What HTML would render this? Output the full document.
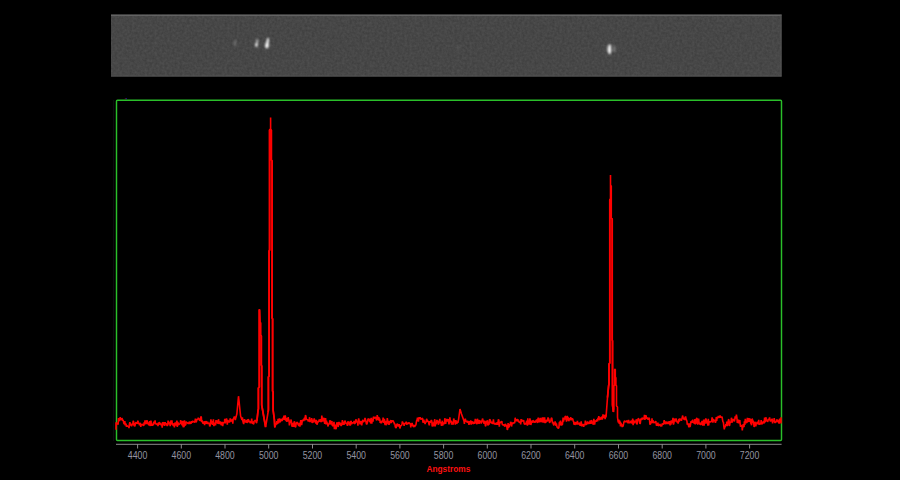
<!DOCTYPE html>
<html><head><meta charset="utf-8"><title>Spectrum</title>
<style>
html,body{margin:0;padding:0;background:#000;}
body{width:900px;height:480px;overflow:hidden;}
svg{display:block;}
text{font-family:"Liberation Sans",sans-serif;}
</style></head><body>
<svg width="900" height="480" viewBox="0 0 900 480">
<defs>
<filter id="grain" x="0" y="0" width="100%" height="100%" color-interpolation-filters="sRGB">
<feTurbulence type="fractalNoise" baseFrequency="0.4" numOctaves="2" seed="3" result="n"/>
<feColorMatrix in="n" type="matrix" values="0.09 0 0 0 0.233  0.09 0 0 0 0.233  0.09 0 0 0 0.233  0 0 0 0 1" result="g"/>
<feComposite in="g" in2="SourceGraphic" operator="in"/>
</filter>
<filter id="b1" x="-100%" y="-100%" width="300%" height="300%"><feGaussianBlur stdDeviation="0.85"/></filter>
<filter id="b2" x="-100%" y="-100%" width="300%" height="300%"><feGaussianBlur stdDeviation="1"/></filter>
<linearGradient id="sg" x1="0" x2="1" y1="0" y2="0">
<stop offset="0" stop-color="#444"/><stop offset="0.5" stop-color="#494949"/><stop offset="1" stop-color="#464646"/>
</linearGradient>
</defs>
<rect width="900" height="480" fill="#000"/>
<!-- spectrum image strip -->
<g>
<rect x="111" y="14.5" width="670.5" height="62" fill="url(#sg)" filter="url(#grain)"/>
<rect x="111" y="14.7" width="670.5" height="1" fill="#707070"/><rect x="111" y="75.6" width="670.5" height="0.9" fill="#555"/><rect x="780.6" y="14.5" width="0.9" height="62" fill="#555"/>
<g filter="url(#b1)">
<ellipse cx="235.1" cy="43" rx="1" ry="3.4" fill="#777" transform="rotate(8 235.1 43)"/>
<ellipse cx="256.9" cy="43" rx="1" ry="4.2" fill="#bbb" transform="rotate(8 256.9 43)"/>
<ellipse cx="256.4" cy="45" rx="1.2" ry="1.8" fill="#fff"/>
<ellipse cx="267.4" cy="43.2" rx="1.2" ry="5.4" fill="#fff" transform="rotate(8 267.4 43.2)"/>
<ellipse cx="266.9" cy="45.4" rx="1.8" ry="2.7" fill="#fff"/>
<ellipse cx="609.6" cy="49.2" rx="1.5" ry="5" fill="#fff"/>
<ellipse cx="609.6" cy="50" rx="1.6" ry="2.6" fill="#fff"/>
<ellipse cx="614.3" cy="49" rx="1" ry="3.6" fill="#858585"/>
<ellipse cx="606.4" cy="49" rx="0.8" ry="3" fill="#5e5e5e"/>
<ellipse cx="458" cy="47.5" rx="0.7" ry="2.5" fill="#606060"/>
</g>
</g>
<!-- plot frame -->
<line x1="113.6" y1="100" x2="113.6" y2="441" stroke="#0d0d0d" stroke-width="1"/>
<rect x="124.8" y="98" width="0.9" height="1.2" fill="#700"/><rect x="125.7" y="98" width="1" height="1.2" fill="#22a"/>
<rect x="116.5" y="100.3" width="665" height="340.1" fill="none" stroke="#2abf2a" stroke-width="1.45" rx="1"/>
<!-- spectrum -->
<polyline points="116.0,429.7 116.0,422.3 116.0,427.0 116.4,423.9 116.8,424.5 117.3,422.7 117.7,423.3 118.1,424.6 118.5,418.1 118.9,420.4 119.4,421.1 119.8,419.6 120.2,417.1 120.6,419.0 121.0,419.6 121.5,419.5 121.9,418.2 122.3,418.9 122.7,420.8 123.1,419.9 123.6,422.2 124.0,423.7 124.4,423.8 124.8,421.2 125.2,425.3 125.7,423.6 126.1,424.3 126.5,426.8 126.9,425.7 127.3,425.9 127.8,426.2 128.2,426.4 128.6,426.6 129.0,428.1 129.4,424.1 129.9,422.2 130.3,425.6 130.7,424.2 131.1,424.6 131.5,426.3 132.0,424.9 132.4,423.6 132.8,424.7 133.2,420.8 133.6,421.7 134.1,426.1 134.5,424.6 134.9,426.5 135.3,423.6 135.7,423.1 136.2,422.1 136.6,423.8 137.0,422.7 137.4,424.0 137.8,420.7 138.3,422.2 138.7,423.2 139.1,423.5 139.5,425.3 139.9,422.9 140.4,423.6 140.8,426.8 141.2,423.9 141.6,425.2 142.0,424.0 142.5,424.8 142.9,425.2 143.3,424.7 143.7,425.9 144.1,422.4 144.6,424.8 145.0,420.4 145.4,422.3 145.8,420.4 146.2,424.1 146.7,420.9 147.1,420.4 147.5,423.9 147.9,422.3 148.3,424.5 148.8,424.3 149.2,425.6 149.6,421.0 150.0,423.9 150.4,426.0 150.9,420.6 151.3,422.5 151.7,424.1 152.1,425.8 152.5,423.9 153.0,424.9 153.4,425.2 153.8,421.7 154.2,422.7 154.6,423.4 155.1,420.4 155.5,424.2 155.9,423.8 156.3,424.0 156.7,423.5 157.2,425.1 157.6,423.5 158.0,426.1 158.4,422.7 158.8,424.8 159.3,422.1 159.7,423.3 160.1,424.4 160.5,422.9 160.9,424.6 161.4,425.3 161.8,424.0 162.2,427.6 162.6,422.4 163.0,422.8 163.5,425.1 163.9,424.5 164.3,422.1 164.7,425.8 165.1,422.2 165.6,423.7 166.0,423.5 166.4,423.9 166.8,425.0 167.2,425.9 167.7,425.1 168.1,420.6 168.5,424.5 168.9,421.7 169.3,423.5 169.8,422.7 170.2,426.2 170.6,423.7 171.0,420.4 171.4,423.7 171.9,420.4 172.3,424.7 172.7,424.6 173.1,425.1 173.5,425.8 174.0,423.2 174.4,427.5 174.8,422.8 175.2,423.4 175.6,425.5 176.1,422.8 176.5,422.5 176.9,420.6 177.3,427.0 177.7,422.1 178.2,423.3 178.6,424.5 179.0,424.8 179.4,423.6 179.8,423.8 180.3,423.6 180.7,420.1 181.1,423.8 181.5,421.2 181.9,424.6 182.4,425.1 182.8,420.8 183.2,427.3 183.6,423.6 184.0,427.2 184.5,420.4 184.9,425.8 185.3,423.2 185.7,425.1 186.1,421.5 186.6,422.5 187.0,422.6 187.4,422.9 187.8,423.3 188.2,423.5 188.7,423.2 189.1,422.1 189.5,422.1 189.9,424.0 190.3,421.6 190.8,423.5 191.2,423.1 191.6,421.1 192.0,422.8 192.4,421.3 192.9,421.2 193.3,422.2 193.7,421.0 194.1,422.2 194.5,422.1 195.0,421.9 195.4,418.6 195.8,422.0 196.2,421.9 196.6,421.2 197.1,418.9 197.5,419.6 197.9,418.8 198.3,417.7 198.7,418.7 199.2,418.8 199.6,420.7 200.0,420.4 200.4,420.8 200.8,416.8 201.3,416.8 201.7,422.1 202.1,421.0 202.5,421.2 202.9,423.6 203.4,422.3 203.8,422.1 204.2,422.2 204.6,425.1 205.0,421.2 205.5,423.9 205.9,421.6 206.3,421.2 206.7,424.0 207.1,422.7 207.6,421.7 208.0,424.0 208.4,423.1 208.8,423.3 209.2,422.5 209.7,426.3 210.1,425.7 210.5,423.2 210.9,419.4 211.3,421.6 211.8,424.2 212.2,421.2 212.6,424.9 213.0,422.3 213.4,419.4 213.9,426.1 214.3,423.6 214.7,422.6 215.1,424.4 215.5,425.3 216.0,420.2 216.4,423.5 216.8,420.4 217.2,422.2 217.6,420.3 218.1,423.9 218.5,419.2 218.9,422.0 219.3,424.0 219.7,422.6 220.2,421.6 220.6,422.7 221.0,424.4 221.4,425.2 221.8,422.2 222.3,422.4 222.7,426.2 223.1,423.3 223.5,422.3 223.9,422.7 224.4,422.7 224.8,418.9 225.2,423.3 225.6,420.3 226.0,421.3 226.5,418.5 226.9,421.0 227.3,424.7 227.7,419.8 228.1,422.5 228.6,421.2 229.0,421.1 229.4,422.2 229.8,421.7 230.2,418.3 230.7,421.4 231.1,420.9 231.5,419.9 231.9,420.5 232.3,418.9 232.8,423.6 233.2,418.7 233.6,418.8 234.0,417.5 234.4,416.4 234.9,418.4 235.3,420.2 235.5,419.0 236.9,413.8 238.5,396.2 240.6,416.0 242.0,420.0 242.0,420.0 242.4,417.4 242.8,420.7 243.3,422.7 243.7,424.1 244.1,420.9 244.5,419.2 244.9,421.5 245.4,421.9 245.8,422.3 246.2,421.9 246.6,419.9 247.0,423.0 247.5,421.0 247.9,419.5 248.3,419.7 248.7,419.8 249.1,422.5 249.6,421.2 250.0,421.6 250.4,423.3 250.8,421.9 251.2,422.7 251.7,418.6 252.1,422.6 252.5,423.6 252.9,421.3 253.3,424.2 253.8,423.7 254.2,421.1 254.6,420.9 255.0,420.5 255.4,420.3 255.9,421.3 256.3,422.9 256.7,422.7 256.9,421.0 258.1,410.0 258.4,409.0 258.4,388.0 259.3,387.0 259.3,309.8 259.5,309.8 259.9,322.0 260.5,323.0 260.5,335.0 261.3,336.0 261.3,365.0 261.7,366.0 261.7,405.0 265.6,427.0 268.1,412.0 268.4,410.0 268.4,377.0 269.1,376.0 269.1,251.0 269.6,250.0 269.6,130.0 270.6,129.0 270.6,117.5 270.6,129.0 271.3,130.0 271.3,160.0 272.1,161.0 272.1,318.0 272.6,319.0 272.6,391.0 273.1,392.0 273.1,410.0 274.4,420.0 274.8,427.0 276.0,423.0 276.0,423.0 276.4,424.6 276.8,421.2 277.3,423.6 277.7,423.2 278.1,418.7 278.5,423.3 278.9,422.3 279.4,418.4 279.8,420.7 280.2,422.4 280.6,421.0 281.0,419.7 281.5,418.8 281.9,420.8 282.3,420.2 282.7,419.5 283.1,417.7 283.6,419.1 284.0,415.6 284.4,419.9 284.8,418.7 285.2,415.4 285.7,418.0 286.1,421.1 286.5,418.4 286.9,421.8 287.3,418.1 287.8,421.5 288.2,417.0 288.6,420.3 289.0,419.5 289.4,425.5 289.9,422.3 290.3,422.2 290.7,422.0 291.1,419.5 291.5,422.3 292.0,426.6 292.4,425.9 292.8,423.1 293.2,423.6 293.6,427.0 294.1,422.3 294.5,421.4 294.9,424.3 295.3,427.1 295.7,426.8 296.2,423.2 296.6,422.9 297.0,422.4 297.4,422.1 297.8,424.3 298.3,423.9 298.7,426.0 299.1,424.0 299.5,422.9 299.9,426.7 300.4,422.8 300.8,420.1 301.2,423.4 301.6,425.2 302.0,422.6 302.5,419.9 302.9,421.2 303.3,419.4 303.7,421.0 304.1,418.9 304.6,417.7 305.0,420.4 305.4,415.4 305.8,415.6 306.2,418.5 306.7,419.6 307.1,419.4 307.5,420.2 307.9,419.5 308.3,421.5 308.8,420.3 309.2,421.1 309.6,417.2 310.0,422.1 310.4,420.5 310.9,420.7 311.3,420.6 311.7,418.0 312.1,423.0 312.5,421.7 313.0,419.7 313.4,421.7 313.8,422.3 314.2,418.3 314.6,420.5 315.1,420.0 315.5,421.3 315.9,423.6 316.3,419.8 316.7,423.5 317.2,424.6 317.6,421.3 318.0,422.6 318.4,421.0 318.8,421.2 319.3,419.6 319.7,420.0 320.1,421.9 320.5,419.0 320.9,421.6 321.4,421.7 321.8,415.5 322.2,418.2 322.6,421.5 323.0,419.5 323.5,419.2 323.9,417.8 324.3,421.0 324.7,423.9 325.1,420.5 325.6,418.1 326.0,424.4 326.4,420.7 326.8,422.4 327.2,423.2 327.7,424.5 328.1,426.5 328.5,423.5 328.9,424.2 329.3,423.6 329.8,421.0 330.2,420.3 330.6,424.4 331.0,423.4 331.4,424.1 331.9,421.0 332.3,425.8 332.7,425.7 333.1,426.0 333.5,424.9 334.0,421.9 334.4,429.3 334.8,424.5 335.2,427.5 335.6,427.2 336.1,429.2 336.5,424.5 336.9,423.0 337.3,422.3 337.7,424.6 338.2,427.0 338.6,423.1 339.0,422.0 339.4,424.3 339.8,424.6 340.3,422.6 340.7,425.0 341.1,425.9 341.5,424.9 341.9,424.9 342.4,420.0 342.8,423.1 343.2,424.9 343.6,422.0 344.0,424.9 344.5,421.5 344.9,420.9 345.3,421.3 345.7,423.2 346.1,423.5 346.6,422.8 347.0,423.8 347.4,425.9 347.8,422.3 348.2,421.3 348.7,423.7 349.1,422.7 349.5,425.5 349.9,421.6 350.3,425.6 350.8,421.2 351.2,421.3 351.6,424.3 352.0,422.8 352.4,422.6 352.9,423.2 353.3,422.8 353.7,423.0 354.1,420.9 354.5,423.6 355.0,423.5 355.4,421.9 355.8,419.8 356.2,419.7 356.6,421.9 357.1,422.2 357.5,421.3 357.9,425.6 358.3,420.3 358.7,418.4 359.2,421.5 359.6,420.9 360.0,424.4 360.4,421.9 360.8,421.9 361.3,421.3 361.7,425.4 362.1,422.8 362.5,420.6 362.9,420.0 363.4,422.1 363.8,421.6 364.2,421.1 364.6,420.1 365.0,417.9 365.5,419.6 365.9,421.3 366.3,423.4 366.7,424.4 367.1,423.5 367.6,421.5 368.0,418.9 368.4,419.0 368.8,419.6 369.2,419.9 369.7,421.8 370.1,418.6 370.5,422.9 370.9,422.9 371.3,417.8 371.8,423.7 372.2,418.9 372.6,419.9 373.0,421.7 373.4,416.7 373.9,417.7 374.3,418.1 374.7,418.3 375.1,417.0 375.5,417.4 376.0,418.0 376.4,419.7 376.8,420.3 377.2,415.1 377.6,417.2 378.1,420.1 378.5,417.6 378.9,417.4 379.3,421.0 379.7,418.6 380.2,422.8 380.6,421.0 381.0,422.7 381.4,423.2 381.8,421.4 382.3,420.8 382.7,422.2 383.1,417.6 383.5,420.0 383.9,422.8 384.4,418.9 384.8,423.5 385.2,425.1 385.6,420.8 386.0,425.2 386.5,423.0 386.9,424.5 387.3,418.1 387.7,421.2 388.1,421.0 388.6,423.3 389.0,424.8 389.4,423.6 389.8,421.1 390.2,422.2 390.7,420.0 391.1,423.0 391.5,421.5 391.9,420.3 392.3,422.0 392.8,421.0 393.2,420.4 393.6,422.2 394.0,422.3 394.4,424.4 394.9,423.6 395.3,427.0 395.7,427.4 396.1,428.1 396.5,425.7 397.0,424.1 397.4,423.9 397.8,424.6 398.2,426.6 398.6,425.4 399.1,424.2 399.5,425.8 399.9,428.5 400.3,426.9 400.7,425.1 401.2,425.9 401.6,425.1 402.0,424.0 402.4,421.5 402.8,423.9 403.3,422.9 403.7,423.4 404.1,425.9 404.5,423.9 404.9,423.9 405.4,423.0 405.8,423.8 406.2,421.6 406.6,424.1 407.0,424.5 407.5,422.9 407.9,423.2 408.3,423.9 408.7,422.9 409.1,422.4 409.6,423.8 410.0,423.6 410.4,423.7 410.8,427.4 411.2,423.3 411.7,424.6 412.1,422.9 412.5,425.7 412.9,424.6 413.3,426.9 413.8,426.5 414.2,425.0 414.6,427.1 415.0,426.0 415.4,425.5 415.9,425.0 416.3,422.4 416.7,420.3 417.1,420.0 417.5,417.7 418.0,419.5 418.4,421.7 418.8,418.8 419.2,417.2 419.6,418.9 420.1,417.1 420.5,418.8 420.9,419.2 421.3,419.3 421.7,418.8 422.2,418.5 422.6,418.3 423.0,422.7 423.4,422.0 423.8,419.7 424.3,422.1 424.7,422.2 425.1,424.1 425.5,421.5 425.9,422.7 426.4,419.8 426.8,418.9 427.2,421.6 427.6,421.0 428.0,421.2 428.5,422.0 428.9,423.8 429.3,425.3 429.7,421.1 430.1,422.5 430.6,421.8 431.0,420.8 431.4,420.1 431.8,421.2 432.2,426.5 432.7,424.0 433.1,423.9 433.5,422.5 433.9,426.4 434.3,421.7 434.8,419.2 435.2,426.3 435.6,423.3 436.0,424.2 436.4,422.8 436.9,420.0 437.3,421.1 437.7,422.4 438.1,423.2 438.5,424.7 439.0,420.5 439.4,422.1 439.8,418.9 440.2,423.3 440.6,422.5 441.1,423.1 441.5,425.9 441.9,423.7 442.3,420.7 442.7,425.7 443.2,422.9 443.6,424.1 444.0,422.4 444.4,424.3 444.8,418.2 445.3,420.7 445.7,423.8 446.1,419.9 446.5,420.6 446.9,418.8 447.4,421.5 447.8,420.1 448.2,419.1 448.6,421.3 449.0,424.3 449.5,420.1 449.9,417.4 450.3,421.4 450.7,422.5 451.1,420.5 451.6,424.6 452.0,421.7 452.4,422.4 452.8,424.6 453.2,423.8 453.7,418.5 454.1,420.3 454.5,420.4 454.9,421.2 455.3,424.6 455.8,420.1 456.2,421.8 456.6,423.7 457.0,423.3 457.4,421.5 457.9,422.8 458.3,420.3 458.5,420.0 460.0,409.0 461.5,414.0 464.0,421.0 464.0,421.0 464.4,423.8 464.8,420.4 465.3,418.6 465.7,420.7 466.1,421.4 466.5,421.4 466.9,420.6 467.4,422.8 467.8,421.5 468.2,421.4 468.6,423.1 469.0,424.8 469.5,422.0 469.9,421.4 470.3,423.3 470.7,420.3 471.1,424.6 471.6,422.5 472.0,421.3 472.4,422.7 472.8,422.8 473.2,424.0 473.7,421.9 474.1,422.3 474.5,423.6 474.9,423.1 475.3,418.9 475.8,423.2 476.2,419.6 476.6,423.4 477.0,424.2 477.4,418.7 477.9,423.5 478.3,422.5 478.7,419.9 479.1,423.9 479.5,420.1 480.0,422.2 480.4,421.5 480.8,421.6 481.2,423.7 481.6,420.8 482.1,420.8 482.5,418.6 482.9,419.9 483.3,422.0 483.7,423.1 484.2,423.4 484.6,420.7 485.0,421.9 485.4,426.1 485.8,425.9 486.3,421.9 486.7,421.2 487.1,422.7 487.5,420.2 487.9,425.4 488.4,424.3 488.8,424.8 489.2,423.2 489.6,419.4 490.0,419.6 490.5,420.8 490.9,423.1 491.3,421.6 491.7,423.5 492.1,421.6 492.6,422.7 493.0,424.0 493.4,419.4 493.8,423.1 494.2,422.9 494.7,424.5 495.1,423.5 495.5,423.3 495.9,424.2 496.3,424.4 496.8,423.0 497.2,422.5 497.6,424.8 498.0,422.6 498.4,419.4 498.9,420.6 499.3,426.6 499.7,422.5 500.1,422.8 500.5,422.5 501.0,421.8 501.4,422.7 501.8,421.0 502.2,424.1 502.6,424.8 503.1,424.9 503.5,425.3 503.9,425.0 504.3,424.6 504.7,426.7 505.2,424.7 505.6,423.9 506.0,425.4 506.4,425.6 506.8,426.5 507.3,429.8 507.7,429.0 508.1,423.0 508.5,427.8 508.9,426.9 509.4,426.2 509.8,424.2 510.2,424.6 510.6,421.8 511.0,422.6 511.5,426.5 511.9,424.3 512.3,422.3 512.7,424.1 513.1,423.0 513.6,422.8 514.0,422.6 514.4,423.3 514.8,422.3 515.2,417.7 515.7,421.4 516.1,419.6 516.5,419.2 516.9,421.1 517.3,420.5 517.8,419.0 518.2,421.6 518.6,420.4 519.0,422.1 519.4,422.3 519.9,422.3 520.3,421.8 520.7,424.4 521.1,419.1 521.5,421.6 522.0,421.2 522.4,420.0 522.8,420.5 523.2,421.4 523.6,420.0 524.1,423.2 524.5,424.3 524.9,424.2 525.3,423.7 525.7,423.2 526.2,424.6 526.6,420.8 527.0,421.1 527.4,425.6 527.8,418.4 528.3,424.1 528.7,420.7 529.1,424.6 529.5,423.1 529.9,418.4 530.4,421.0 530.8,425.0 531.2,423.8 531.6,420.6 532.0,422.3 532.5,422.3 532.9,420.4 533.3,420.8 533.7,421.5 534.1,422.5 534.6,421.6 535.0,422.8 535.4,420.7 535.8,420.9 536.2,421.5 536.7,419.4 537.1,422.1 537.5,422.8 537.9,419.3 538.3,417.6 538.8,420.0 539.2,422.3 539.6,421.0 540.0,420.0 540.4,417.9 540.9,422.1 541.3,421.4 541.7,420.5 542.1,418.8 542.5,417.4 543.0,422.8 543.4,417.4 543.8,420.8 544.2,422.6 544.6,417.4 545.1,423.2 545.5,420.2 545.9,422.5 546.3,420.5 546.7,420.2 547.2,421.0 547.6,420.9 548.0,417.4 548.4,418.5 548.8,419.2 549.3,421.6 549.7,422.9 550.1,421.4 550.5,421.1 550.9,420.2 551.4,417.9 551.8,418.1 552.2,420.6 552.6,423.5 553.0,421.9 553.5,424.7 553.9,425.4 554.3,423.2 554.7,424.1 555.1,421.4 555.6,422.8 556.0,425.8 556.4,423.5 556.8,425.8 557.2,427.6 557.7,426.8 558.1,428.7 558.5,428.0 558.9,427.8 559.3,422.7 559.8,421.9 560.2,425.3 560.6,420.6 561.0,423.6 561.4,425.5 561.9,422.4 562.3,425.2 562.7,422.1 563.1,417.6 563.5,421.7 564.0,418.9 564.4,417.8 564.8,419.5 565.2,416.0 565.6,416.6 566.1,418.0 566.5,421.7 566.9,419.6 567.3,415.8 567.7,417.6 568.2,417.6 568.6,420.9 569.0,420.7 569.4,418.2 569.8,419.8 570.3,418.9 570.7,417.2 571.1,420.3 571.5,419.0 571.9,418.8 572.4,419.0 572.8,418.8 573.2,421.5 573.6,421.2 574.0,424.6 574.5,422.4 574.9,425.0 575.3,422.5 575.7,422.6 576.1,422.3 576.6,424.5 577.0,423.2 577.4,420.9 577.8,424.6 578.2,423.1 578.7,424.4 579.1,423.4 579.5,422.6 579.9,425.6 580.3,424.5 580.8,425.8 581.2,421.3 581.6,426.3 582.0,425.5 582.4,425.1 582.9,424.0 583.3,425.1 583.7,426.8 584.1,424.2 584.5,425.1 585.0,424.3 585.4,420.5 585.8,424.4 586.2,424.9 586.6,422.3 587.1,424.3 587.5,421.3 587.9,423.2 588.3,422.0 588.7,424.1 589.2,422.2 589.6,423.9 590.0,421.2 590.4,420.6 590.8,423.9 591.3,420.8 591.7,420.4 592.1,423.6 592.5,421.7 592.9,423.4 593.4,424.8 593.8,418.8 594.2,421.2 594.6,424.7 595.0,421.9 595.5,420.8 595.9,421.0 596.3,421.2 596.7,421.2 597.1,419.2 597.6,421.3 598.0,417.8 598.4,418.6 598.8,416.1 599.2,419.6 599.7,419.8 600.1,417.3 600.5,418.8 600.9,419.5 601.3,417.2 601.8,417.1 602.2,419.4 602.6,418.8 603.0,414.3 603.4,416.1 603.9,415.0 604.3,417.9 604.7,414.8 605.1,419.1 605.5,414.6 606.0,417.4 606.2,415.0 607.5,397.5 608.6,386.0 609.0,384.0 609.0,364.0 609.8,363.0 609.8,200.0 610.5,199.0 610.5,175.0 610.5,185.0 611.2,186.0 611.2,218.0 612.2,219.0 612.2,340.0 612.5,341.0 612.5,405.0 613.4,412.0 613.9,409.0 613.9,386.0 614.6,385.0 614.6,369.4 615.3,369.4 615.3,377.0 615.9,378.0 615.9,385.0 616.5,386.0 616.5,406.0 617.5,407.0 617.5,417.0 618.0,421.0 618.0,421.0 618.4,422.5 618.8,419.6 619.3,423.8 619.7,420.7 620.1,422.4 620.5,426.3 620.9,422.8 621.4,424.9 621.8,424.4 622.2,427.2 622.6,425.4 623.0,426.5 623.5,424.1 623.9,422.0 624.3,421.4 624.7,420.7 625.1,421.9 625.6,421.4 626.0,421.8 626.4,421.8 626.8,420.4 627.2,422.1 627.7,422.0 628.1,423.3 628.5,419.9 628.9,421.1 629.3,423.1 629.8,422.5 630.2,422.5 630.6,422.1 631.0,420.7 631.4,423.5 631.9,420.4 632.3,422.0 632.7,418.6 633.1,425.2 633.5,419.9 634.0,421.8 634.4,421.1 634.8,423.4 635.2,420.9 635.6,421.9 636.1,420.4 636.5,419.4 636.9,424.5 637.3,422.8 637.7,421.1 638.2,418.6 638.6,418.4 639.0,420.1 639.4,419.4 639.8,423.6 640.3,423.4 640.7,419.7 641.1,418.5 641.5,420.0 641.9,418.8 642.4,417.6 642.8,419.3 643.2,418.8 643.6,418.0 644.0,418.8 644.5,414.9 644.9,419.9 645.3,416.4 645.7,415.3 646.1,416.0 646.6,418.8 647.0,418.0 647.4,417.4 647.8,419.2 648.2,419.4 648.7,419.0 649.1,417.7 649.5,419.7 649.9,424.0 650.3,424.7 650.8,421.2 651.2,422.8 651.6,423.3 652.0,418.4 652.4,423.0 652.9,420.4 653.3,421.1 653.7,423.2 654.1,422.3 654.5,421.9 655.0,422.9 655.4,422.2 655.8,421.0 656.2,423.9 656.6,425.9 657.1,423.6 657.5,425.4 657.9,422.6 658.3,425.9 658.7,425.5 659.2,424.3 659.6,425.5 660.0,424.0 660.4,425.9 660.8,426.1 661.3,425.2 661.7,426.4 662.1,423.5 662.5,424.2 662.9,423.6 663.4,424.5 663.8,422.5 664.2,420.1 664.6,422.8 665.0,423.3 665.5,424.0 665.9,421.5 666.3,422.4 666.7,424.0 667.1,421.6 667.6,423.6 668.0,423.1 668.4,423.9 668.8,421.3 669.2,422.9 669.7,421.1 670.1,425.4 670.5,422.9 670.9,424.8 671.3,420.3 671.8,422.5 672.2,422.9 672.6,420.8 673.0,417.8 673.4,424.6 673.9,422.9 674.3,419.2 674.7,419.0 675.1,421.7 675.5,419.8 676.0,418.4 676.4,419.6 676.8,421.4 677.2,422.4 677.6,421.0 678.1,423.7 678.5,421.8 678.9,418.8 679.3,421.6 679.7,418.5 680.2,419.2 680.6,419.7 681.0,419.9 681.4,420.8 681.8,419.3 682.3,417.2 682.7,415.5 683.1,418.3 683.5,417.8 683.9,419.2 684.4,419.3 684.8,419.8 685.2,417.4 685.6,416.5 686.0,418.9 686.5,420.2 686.9,421.0 687.3,424.6 687.7,423.8 688.1,423.6 688.6,426.0 689.0,427.3 689.4,423.3 689.8,426.9 690.2,426.3 690.7,423.4 691.1,421.1 691.5,422.0 691.9,420.6 692.3,422.9 692.8,419.6 693.2,423.0 693.6,422.3 694.0,421.9 694.4,423.8 694.9,419.1 695.3,424.4 695.7,422.1 696.1,423.5 696.5,418.4 697.0,418.4 697.4,421.7 697.8,424.6 698.2,422.7 698.6,418.6 699.1,423.2 699.5,423.0 699.9,424.5 700.3,422.6 700.7,425.0 701.2,422.5 701.6,424.5 702.0,420.8 702.4,422.8 702.8,425.6 703.3,423.1 703.7,419.6 704.1,425.6 704.5,419.6 704.9,423.9 705.4,420.6 705.8,418.4 706.2,419.7 706.6,421.0 707.0,423.6 707.5,421.5 707.9,425.6 708.3,418.7 708.7,425.5 709.1,421.2 709.6,422.0 710.0,422.0 710.4,421.8 710.8,422.3 711.2,421.4 711.7,420.9 712.1,417.4 712.5,418.6 712.9,422.6 713.3,419.8 713.8,419.8 714.2,421.3 714.6,420.3 715.0,420.7 715.4,422.9 715.9,421.0 716.3,417.0 716.7,421.0 717.1,416.9 717.5,418.6 718.0,417.0 718.4,416.1 718.8,416.8 719.2,417.3 719.6,417.4 720.1,415.5 720.5,417.8 720.9,416.4 721.3,417.6 721.7,416.6 722.2,417.7 722.6,420.1 723.0,422.2 723.4,422.1 723.8,426.1 724.3,429.4 724.7,426.3 725.1,427.4 725.5,425.8 725.9,424.2 726.4,425.6 726.8,421.6 727.2,426.2 727.6,424.0 728.0,422.3 728.5,419.7 728.9,419.5 729.3,426.0 729.7,424.9 730.1,421.9 730.6,422.2 731.0,422.6 731.4,417.7 731.8,420.2 732.2,422.7 732.7,420.2 733.1,419.0 733.5,420.6 733.9,418.9 734.3,421.5 734.8,419.6 735.2,416.3 735.6,418.3 736.0,417.8 736.4,414.6 736.9,417.6 737.3,422.9 737.7,419.4 738.1,421.7 738.5,423.4 739.0,419.8 739.4,422.1 739.8,420.0 740.2,424.5 740.6,426.8 741.1,425.0 741.5,426.8 741.9,426.4 742.3,430.3 742.7,426.6 743.2,424.1 743.6,426.7 744.0,426.9 744.4,421.4 744.8,425.0 745.3,418.8 745.7,422.3 746.1,423.1 746.5,422.3 746.9,423.0 747.4,417.9 747.8,420.5 748.2,421.6 748.6,421.3 749.0,418.2 749.5,421.2 749.9,421.4 750.3,418.5 750.7,423.3 751.1,423.5 751.6,425.3 752.0,419.0 752.4,419.1 752.8,423.2 753.2,420.7 753.7,423.1 754.1,426.8 754.5,426.3 754.9,421.8 755.3,423.3 755.8,426.5 756.2,423.9 756.6,422.5 757.0,423.9 757.4,421.7 757.9,422.2 758.3,424.7 758.7,419.8 759.1,424.1 759.5,424.3 760.0,424.2 760.4,423.3 760.8,423.9 761.2,420.1 761.6,424.4 762.1,423.6 762.5,423.7 762.9,422.4 763.3,421.6 763.7,421.4 764.2,423.4 764.6,417.6 765.0,421.8 765.4,421.5 765.8,417.3 766.3,419.3 766.7,420.4 767.1,420.7 767.5,421.8 767.9,421.2 768.4,418.9 768.8,419.8 769.2,419.1 769.6,417.4 770.0,420.2 770.5,421.5 770.9,420.1 771.3,420.2 771.7,421.2 772.1,418.6 772.6,423.4 773.0,420.6 773.4,420.0 773.8,421.6 774.2,418.2 774.7,422.2 775.1,423.0 775.5,422.1 775.9,421.8 776.3,422.0 776.8,419.3 777.2,421.8 777.6,420.0 778.0,420.7 778.4,422.3 778.9,423.2 779.3,423.0 779.7,418.6 780.1,421.5 780.5,420.5 781.0,421.6 781.0,417.2 781.0,423.6" fill="none" stroke="#f00" stroke-width="1.6" stroke-linejoin="bevel"/>
<g fill="none" stroke="#f00" stroke-width="1.75" stroke-linejoin="round"><polyline points="256.9,421.0 258.1,410.0 258.4,409.0 258.4,388.0 259.3,387.0 259.3,309.8 259.5,309.8 259.9,322.0 260.5,323.0 260.5,335.0 261.3,336.0 261.3,365.0 261.7,366.0 261.7,405.0 265.6,427.0"/><polyline points="268.1,412.0 268.4,410.0 268.4,377.0 269.1,376.0 269.1,251.0 269.6,250.0 269.6,130.0 270.6,129.0"/><polyline points="271.3,130.0 271.3,160.0 272.1,161.0 272.1,318.0 272.6,319.0 272.6,391.0 273.1,392.0 273.1,410.0 274.4,420.0 274.8,427.0 276.0,423.0"/><polyline points="607.5,397.5 608.6,386.0 609.0,384.0 609.0,364.0 609.8,363.0 609.8,200.0 610.5,199.0"/><polyline points="611.2,186.0 611.2,218.0 612.2,219.0 612.2,340.0 612.5,341.0 612.5,405.0 613.4,412.0"/></g>
<!-- axis -->
<g stroke="#8a8a8a" stroke-width="1">
<line x1="116" y1="444.4" x2="781.6" y2="444.4" stroke="#707070" stroke-width="1.3"/>
<line x1="137.6" y1="444" x2="137.6" y2="448.5"/><line x1="181.3" y1="444" x2="181.3" y2="448.5"/><line x1="225.0" y1="444" x2="225.0" y2="448.5"/><line x1="268.7" y1="444" x2="268.7" y2="448.5"/><line x1="312.5" y1="444" x2="312.5" y2="448.5"/><line x1="356.2" y1="444" x2="356.2" y2="448.5"/><line x1="399.9" y1="444" x2="399.9" y2="448.5"/><line x1="443.6" y1="444" x2="443.6" y2="448.5"/><line x1="487.3" y1="444" x2="487.3" y2="448.5"/><line x1="531.0" y1="444" x2="531.0" y2="448.5"/><line x1="574.7" y1="444" x2="574.7" y2="448.5"/><line x1="618.5" y1="444" x2="618.5" y2="448.5"/><line x1="662.2" y1="444" x2="662.2" y2="448.5"/><line x1="705.9" y1="444" x2="705.9" y2="448.5"/><line x1="749.6" y1="444" x2="749.6" y2="448.5"/>
</g>
<g fill="#9494a0" font-size="10" text-anchor="middle">
<text x="137.6" y="458.9" textLength="19.5" lengthAdjust="spacingAndGlyphs">4400</text><text x="181.3" y="458.9" textLength="19.5" lengthAdjust="spacingAndGlyphs">4600</text><text x="225.0" y="458.9" textLength="19.5" lengthAdjust="spacingAndGlyphs">4800</text><text x="268.7" y="458.9" textLength="19.5" lengthAdjust="spacingAndGlyphs">5000</text><text x="312.5" y="458.9" textLength="19.5" lengthAdjust="spacingAndGlyphs">5200</text><text x="356.2" y="458.9" textLength="19.5" lengthAdjust="spacingAndGlyphs">5400</text><text x="399.9" y="458.9" textLength="19.5" lengthAdjust="spacingAndGlyphs">5600</text><text x="443.6" y="458.9" textLength="19.5" lengthAdjust="spacingAndGlyphs">5800</text><text x="487.3" y="458.9" textLength="19.5" lengthAdjust="spacingAndGlyphs">6000</text><text x="531.0" y="458.9" textLength="19.5" lengthAdjust="spacingAndGlyphs">6200</text><text x="574.7" y="458.9" textLength="19.5" lengthAdjust="spacingAndGlyphs">6400</text><text x="618.5" y="458.9" textLength="19.5" lengthAdjust="spacingAndGlyphs">6600</text><text x="662.2" y="458.9" textLength="19.5" lengthAdjust="spacingAndGlyphs">6800</text><text x="705.9" y="458.9" textLength="19.5" lengthAdjust="spacingAndGlyphs">7000</text><text x="749.6" y="458.9" textLength="19.5" lengthAdjust="spacingAndGlyphs">7200</text>
</g>
<text x="448.4" y="471.7" fill="#ff1010" font-size="9" font-weight="bold" text-anchor="middle" textLength="44" lengthAdjust="spacingAndGlyphs">Angstroms</text>
</svg>
</body></html>
